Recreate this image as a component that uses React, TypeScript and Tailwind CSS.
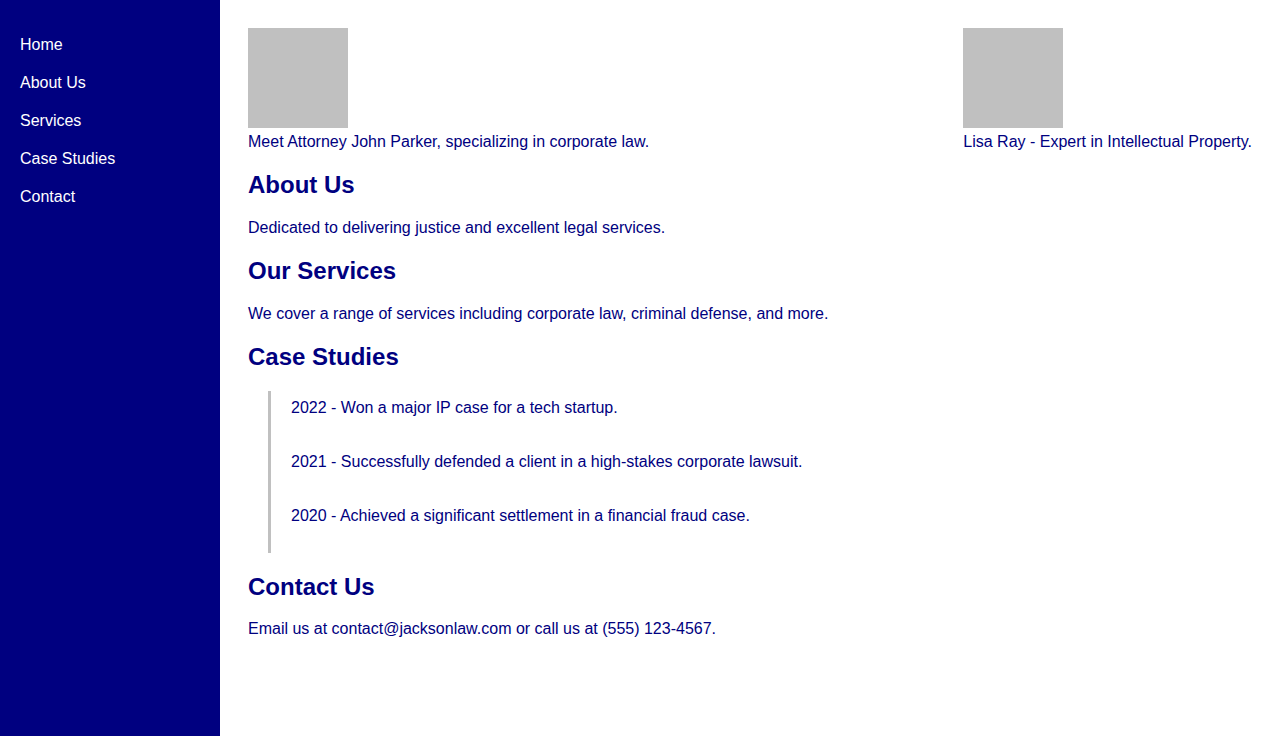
const links = ["Home", "About Us", "Services", "Case Studies", "Contact"];

const cases = [
  "2022 - Won a major IP case for a tech startup.",
  "2021 - Successfully defended a client in a high-stakes corporate lawsuit.",
  "2020 - Achieved a significant settlement in a financial fraud case.",
];

function Profile(props: { caption: string }) {
  return (
    <div className="flex flex-col">
      <div className="w-[100px] h-[100px] bg-[#c0c0c0]" />
      <p className="mt-[5px] leading-[18px]">{props.caption}</p>
    </div>
  );
}

export default function App() {
  return (
    <div
      className="flex min-h-[736px] text-[16px]"
      style={{ fontFamily: '"Liberation Sans", Arial, sans-serif' }}
    >
      <nav className="w-[220px] shrink-0 bg-[#000080] px-[20px] pt-[26px]">
        <ul>
          {links.map((l) => (
            <li key={l} className="py-[10px] leading-[18px] text-white">
              {l}
            </li>
          ))}
        </ul>
      </nav>

      <main className="flex-1 p-[28px] text-[#000080]">
        <div className="flex justify-between">
          <Profile caption="Meet Attorney John Parker, specializing in corporate law." />
          <Profile caption="Lisa Ray - Expert in Intellectual Property." />
        </div>

        <h2 className="mt-[20px] text-[24px] leading-[28px] font-bold">About Us</h2>
        <p className="mt-[20px] leading-[18px]">
          Dedicated to delivering justice and excellent legal services.
        </p>

        <h2 className="mt-[20px] text-[24px] leading-[28px] font-bold">Our Services</h2>
        <p className="mt-[20px] leading-[18px]">
          We cover a range of services including corporate law, criminal defense, and more.
        </p>

        <h2 className="mt-[20px] text-[24px] leading-[28px] font-bold">Case Studies</h2>
        <div className="mt-[20px] ml-[20px] border-l-[3px] border-[#c0c0c0] pl-[20px] pt-[8px] pb-[28px] flex flex-col gap-[36px]">
          {cases.map((c) => (
            <p key={c} className="leading-[18px]">
              {c}
            </p>
          ))}
        </div>

        <h2 className="mt-[20px] text-[24px] leading-[28px] font-bold">Contact Us</h2>
        <p className="mt-[19px] leading-[18px]">
          Email us at contact@jacksonlaw.com or call us at (555) 123-4567.
        </p>
      </main>
    </div>
  );
}
